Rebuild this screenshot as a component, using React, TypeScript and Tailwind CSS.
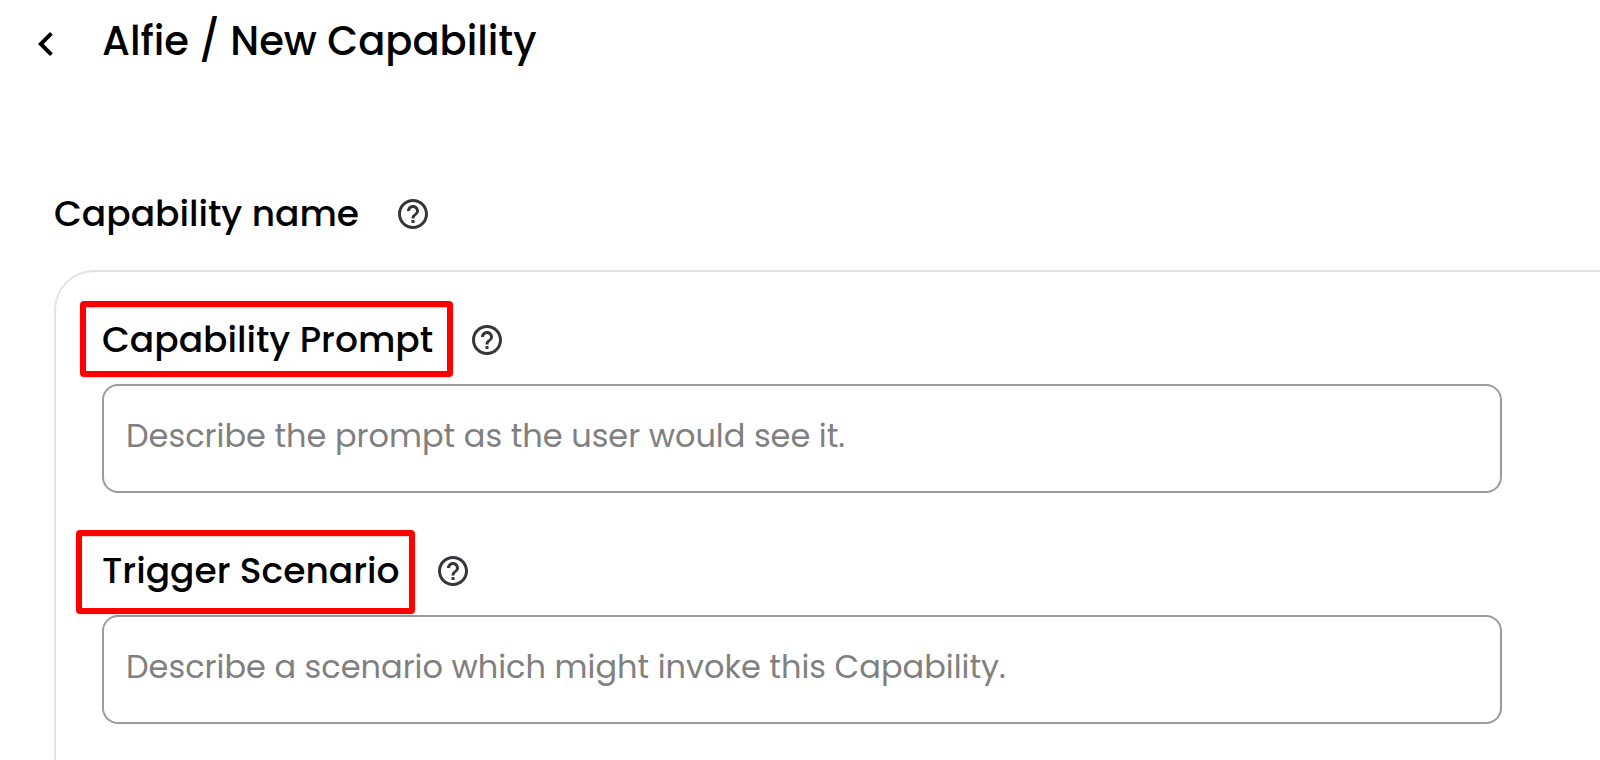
import { useId } from "react";
import { MdChevronLeft, MdHelpOutline } from "react-icons/md";

function HelpButton({ topic }: { topic: string }) {
  return (
    <button type="button" aria-label={`Help: ${topic}`} className="shrink-0 text-[#35353b]">
      <MdHelpOutline className="size-9" />
    </button>
  );
}

type PromptFieldProps = {
  label: string;
  placeholder: string;
  highlightClass: string;
};

function PromptField({ label, placeholder, highlightClass }: PromptFieldProps) {
  const id = useId();
  return (
    <div>
      <div className="flex h-15 items-center gap-9">
        <div className="relative">
          <label htmlFor={id} className="text-[36px] leading-[54px] font-medium">
            {label}
          </label>
          <span
            aria-hidden="true"
            className={`pointer-events-none absolute rounded-sm border-6 border-[#ff0000] shadow-sm inset-shadow-xs inset-shadow-black/20 ${highlightClass}`}
          />
        </div>
        <HelpButton topic={label} />
      </div>
      <input
        id={id}
        type="text"
        placeholder={placeholder}
        className="mt-[14px] block h-[109px] w-full rounded-2xl border-2 border-[#9b9b9b] bg-transparent px-[22px] pb-1.5 text-[32px] font-normal text-black outline-none placeholder:text-[#808080]"
      />
    </div>
  );
}

export default function App() {
  return (
    <div className="flex h-screen flex-col overflow-hidden bg-white font-['Poppins','Inter',sans-serif] text-black antialiased">
      <header className="flex h-[82px] shrink-0 items-center gap-8 pl-[22px]">
        <button type="button" aria-label="Back" className="shrink-0 pt-1.5">
          <MdChevronLeft className="size-12" />
        </button>
        <h1 className="text-[40px] leading-[60px] font-medium">Alfie / New Capability</h1>
      </header>
      <main className="flex grow flex-col pt-[102px] pl-[54px]">
        <div className="flex h-15 items-center gap-9">
          <h2 className="text-[36px] leading-[54px] font-medium">Capability name</h2>
          <HelpButton topic="Capability name" />
        </div>
        <section className="mt-[26px] flex grow flex-col gap-12 rounded-tl-[40px] border-t-2 border-l-2 border-[#e3e3e3] pt-[38px] pr-[98px] pl-[46px]">
          <PromptField
            label="Capability Prompt"
            placeholder="Describe the prompt as the user would see it."
            highlightClass="-top-3 -bottom-[10px] -left-[22px] -right-5"
          />
          <PromptField
            label="Trigger Scenario"
            placeholder="Describe a scenario which might invoke this Capability."
            highlightClass="-top-[14px] -bottom-4 -left-[26px] -right-4"
          />
        </section>
      </main>
    </div>
  );
}
